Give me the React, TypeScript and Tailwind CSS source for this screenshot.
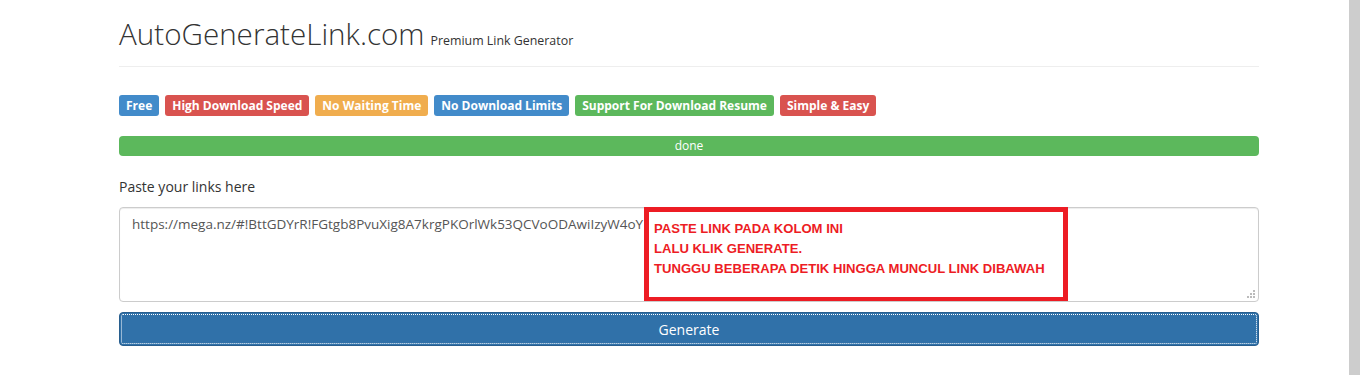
const badges = [
    { label: 'Free', color: 'bg-[#428bca]' },
    { label: 'High Download Speed', color: 'bg-[#d9534f]' },
    { label: 'No Waiting Time', color: 'bg-[#f0ad4e]' },
    { label: 'No Download Limits', color: 'bg-[#428bca]' },
    { label: 'Support For Download Resume', color: 'bg-[#5cb85c]' },
    { label: 'Simple & Easy', color: 'bg-[#d9534f]' },
];

export default function App() {
    return (
        <div className="flex h-[375px] w-full overflow-hidden bg-white font-['Open_Sans',sans-serif] text-[#333]">
            <div className="flex-1">
                <div className="ml-[119px] w-[1140px]">
                    {/* header */}
                    <div className="flex items-baseline gap-[6px] border-b border-[#eee] pt-[14px] pb-[12px]">
                        <h1 className="text-[29.6px] leading-[40px] font-light">
                            AutoGenerateLink.com
                        </h1>
                        <small className="text-[12.4px] text-[#333]">
                            Premium Link Generator
                        </small>
                    </div>

                    {/* feature labels */}
                    <div className="mt-[28px] flex gap-[6px]">
                        {badges.map((b) => (
                            <span
                                key={b.label}
                                className={`${b.color} rounded-[3px] px-[7px] text-[12px] leading-[21px] font-bold text-white`}
                            >
                                {b.label}
                            </span>
                        ))}
                    </div>

                    {/* progress */}
                    <div className="mt-[20px] h-[20px] rounded-[4px] bg-[#5cb85c] text-center text-[12px] leading-[20px] text-white">
                        done
                    </div>

                    <label className="mt-[20px] block text-[14px] leading-[22px]">
                        Paste your links here
                    </label>

                    <div className="relative mt-[9px]">
                        <textarea
                            readOnly
                            className="block h-[95px] w-full resize-none rounded-[4px] border border-[#ccc] px-[12px] py-[6px] text-[13.5px] leading-[20px] text-[#555] shadow-[inset_0_1px_1px_rgba(0,0,0,0.075)] outline-none"
                            defaultValue="https://mega.nz/#!BttGDYrR!FGtgb8PvuXig8A7krgPKOrlWk53QCVoODAwiIzyW4oY"
                        />
                        {/* resize grip */}
                        <div className="absolute right-[4px] bottom-[4px] grid grid-cols-3 gap-[1px]">
                            <span className="size-[2px]" />
                            <span className="size-[2px]" />
                            <span className="size-[2px] bg-[#bbb]" />
                            <span className="size-[2px]" />
                            <span className="size-[2px] bg-[#bbb]" />
                            <span className="size-[2px] bg-[#bbb]" />
                            <span className="size-[2px] bg-[#bbb]" />
                            <span className="size-[2px] bg-[#bbb]" />
                            <span className="size-[2px] bg-[#bbb]" />
                        </div>
                        <div className="absolute top-0 left-[525px] h-[94px] w-[424px] border-[5px] border-b-[4px] border-[#ed1c24] bg-white px-[5px] pt-[7px] font-['Liberation_Sans',Arial,sans-serif] text-[13.1px] leading-[20px] font-bold text-[#ed1c24]">
                            <div>PASTE LINK PADA KOLOM INI</div>
                            <div>LALU KLIK GENERATE.</div>
                            <div>TUNGGU BEBERAPA DETIK HINGGA MUNCUL LINK DIBAWAH</div>
                        </div>
                    </div>

                    <button className="mt-[10px] block h-[34px] w-full rounded-[4px] border border-[#285e8e] bg-[#3071a9] text-[14px] text-white outline-1 outline-offset-[-3px] outline-white outline-dotted">
                        Generate
                    </button>
                </div>
            </div>
            <div className="h-full w-[11px] bg-[#cdcdcd]" />
        </div>
    );
}
